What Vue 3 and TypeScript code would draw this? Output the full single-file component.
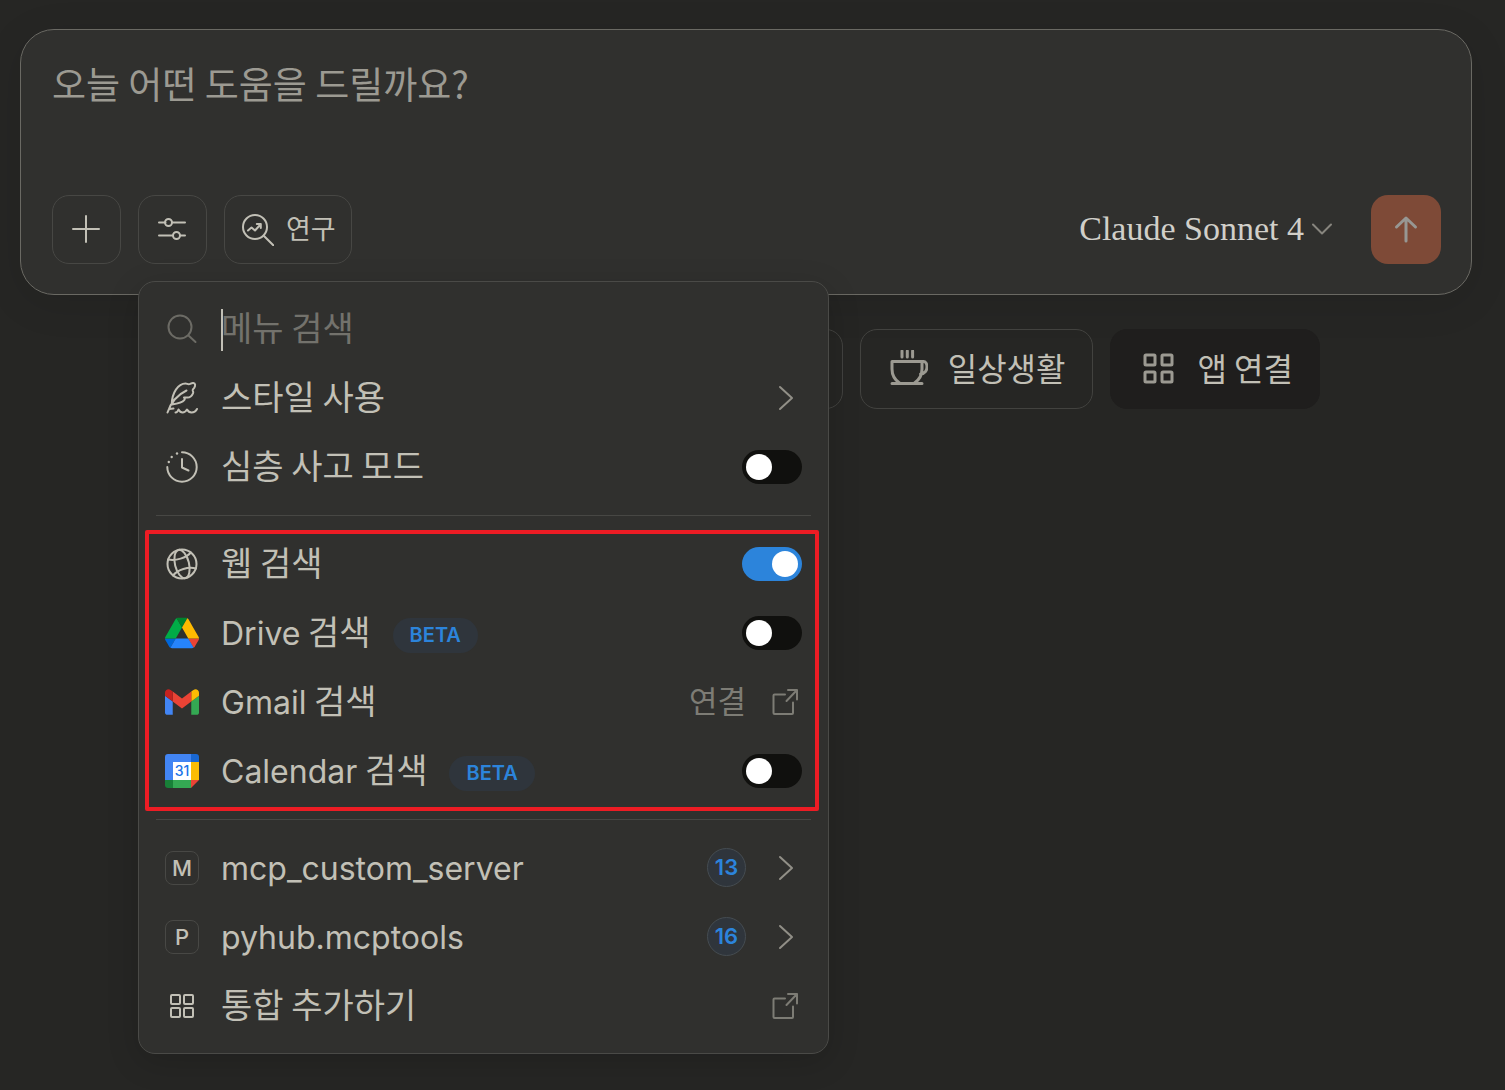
<script setup lang="ts">
import { ref } from 'vue'

type IconName = 'feather' | 'clock' | 'globe' | 'drive' | 'gmail' | 'calendar' | 'grid'

interface MenuItem {
  id: string
  latin?: string
  label?: string
  icon?: IconName
  letter?: string
  beta?: boolean
  count?: number
  trailing: 'toggle' | 'chevron' | 'external'
  note?: string
}

const groups: MenuItem[][] = [
  [
    { id: 'style', label: '스타일 사용', icon: 'feather', trailing: 'chevron' },
    { id: 'thinking', label: '심층 사고 모드', icon: 'clock', trailing: 'toggle' },
  ],
  [
    { id: 'web', label: '웹 검색', icon: 'globe', trailing: 'toggle' },
    { id: 'drive', latin: 'Drive', label: ' 검색', icon: 'drive', beta: true, trailing: 'toggle' },
    { id: 'gmail', latin: 'Gmail', label: ' 검색', icon: 'gmail', trailing: 'external', note: '연결' },
    { id: 'calendar', latin: 'Calendar', label: ' 검색', icon: 'calendar', beta: true, trailing: 'toggle' },
  ],
  [
    { id: 'mcp', latin: 'mcp_custom_server', letter: 'M', count: 13, trailing: 'chevron' },
    { id: 'pyhub', latin: 'pyhub.mcptools', letter: 'P', count: 16, trailing: 'chevron' },
    { id: 'add', label: '통합 추가하기', icon: 'grid', trailing: 'external' },
  ],
]

const enabled = ref<Record<string, boolean>>({ thinking: false, web: true, drive: false, calendar: false })
const message = ref('')
const query = ref('')
</script>

<template>
  <main class="page">
    <form class="composer" @submit.prevent>
      <textarea v-model="message" class="prompt" placeholder="오늘 어떤 도움을 드릴까요?" aria-label="메시지"></textarea>
      <div class="toolbar">
        <button type="button" class="tool" aria-label="추가">
          <svg class="icon" viewBox="0 0 34 34"><path d="M17 4v26M4 17h26" /></svg>
        </button>
        <div class="anchor">
          <button type="button" class="tool" aria-label="도구" aria-expanded="true">
            <svg class="icon" viewBox="0 0 34 34">
              <path d="M4 10.500h6.500M17 10.500h13M4 23.500h14M25 23.500h5" />
              <circle cx="13.500" cy="10.500" r="3.500" /><circle cx="21.500" cy="23.500" r="3.500" />
            </svg>
          </button>

          <div class="menu">
            <label class="row search">
              <svg class="icon" viewBox="0 0 34 34"><circle cx="15" cy="15" r="11.500" /><path d="M23.500 23.500l7 6.500" /></svg>
              <span class="field">
                <input v-model="query" type="text" placeholder="메뉴 검색" aria-label="메뉴 검색" />
                <span class="caret"></span>
              </span>
            </label>

            <div v-for="(group, g) in groups" :key="g" class="group" :class="{ marked: g === 1, divided: g > 0 }">
              <component
                :is="item.trailing === 'toggle' ? 'label' : 'button'"
                v-for="item in group"
                :key="item.id"
                class="row"
                :type="item.trailing === 'toggle' ? undefined : 'button'"
              >
                <span v-if="item.letter" class="letter">{{ item.letter }}</span>
                <svg v-else-if="item.icon === 'feather'" class="icon" viewBox="0 0 34 34">
                  <path d="M2.500 31.500C5 24 10 15 21.500 9.500M6.800 22.800C7 12 13 2.500 20.500 2.500c1.500 0 2 .8 3.200.8 1.800 0 2.600-1.600 4.600-1.300 2.200.3 2.300 2.500 1 4.700-.8 1.300-1.800 1.500-1.600 2.800.3 1.300 1 1.200.3 2.800-1 2.300-3.200 4.200-5.500 4.200-1 0-2-.3-3.500 0 1 .5 1 1.700.2 2.700-2 2.700-6.500 3.500-12.200 4.300M4.500 28l4-.5M10.500 31.500c1.500 0 2.500-1.500 3-3 1 1.800 2.200 3 4 3 2 0 3.600-1.500 4.500-3 1 1.800 2.600 3 4.500 3 2.400 0 4.400-1.300 5.500-3.500" />
                </svg>
                <svg v-else-if="item.icon === 'clock'" class="icon" viewBox="0 0 34 34">
                  <path d="M17 2.300A14.700 14.700 0 1 1 2.300 17M17 9v8.500l6.500 3" />
                  <g class="dots"><circle cx="12" cy="3.500" r="1.200" /><circle cx="6.700" cy="7" r="1.200" /><circle cx="3.800" cy="12" r="1.200" /></g>
                </svg>
                <svg v-else-if="item.icon === 'globe'" class="icon" viewBox="0 0 34 34">
                  <circle cx="17" cy="17" r="14.500" />
                  <ellipse cx="17" cy="17" rx="7" ry="14.500" transform="rotate(-14 17 17)" />
                  <path d="M3 12.500C11 14 21 11 26 5.500M8 28.500C13 22.500 23 19.500 31 21.500" />
                </svg>
                <svg v-else-if="item.icon === 'drive'" class="logo" viewBox="0 0 87.3 78">
                  <path fill="#0066da" d="m6.600 66.850 3.850 6.650c.8 1.400 1.950 2.500 3.300 3.300l13.750-23.800h-27.500c0 1.550.4 3.100 1.200 4.500z" />
                  <path fill="#00ac47" d="m43.650 25-13.750-23.800c-1.350.8-2.500 1.900-3.300 3.300l-25.400 44a9.060 9.060 0 0 0-1.200 4.500h27.500z" />
                  <path fill="#ea4335" d="m73.550 76.800c1.350-.8 2.500-1.900 3.300-3.300l1.600-2.750 7.650-13.250c.8-1.400 1.200-2.950 1.200-4.500h-27.500l5.850 11.500z" />
                  <path fill="#00832d" d="m43.650 25 13.750-23.800c-1.350-.8-2.900-1.200-4.500-1.200h-18.500c-1.600 0-3.150.45-4.500 1.200z" />
                  <path fill="#2684fc" d="m59.800 53h-32.300l-13.750 23.800c1.350.8 2.900 1.200 4.500 1.200h50.800c1.600 0 3.150-.45 4.500-1.200z" />
                  <path fill="#ffba00" d="m73.400 26.500-12.700-22c-.8-1.400-1.950-2.500-3.300-3.300l-13.750 23.800 16.150 28h27.450c0-1.550-.4-3.100-1.200-4.500z" />
                </svg>
                <svg v-else-if="item.icon === 'gmail'" class="logo" viewBox="52 42 88 66">
                  <path fill="#4285f4" d="M58 108h14V74L52 59v43c0 3.320 2.690 6 6 6" />
                  <path fill="#34a853" d="M120 108h14c3.320 0 6-2.690 6-6V59l-20 15" />
                  <path fill="#fbbc04" d="M120 48v26l20-15v-8c0-7.420-8.470-11.650-14.400-7.200" />
                  <path fill="#ea4335" d="M72 74V48l24 18 24-18v26L96 92" />
                  <path fill="#c5221f" d="M52 51v8l20 15V48l-5.600-4.200c-5.940-4.450-14.400-.22-14.400 7.200" />
                </svg>
                <svg v-else-if="item.icon === 'calendar'" class="logo" viewBox="0 0 34 34">
                  <path fill="#4285f4" d="M3 0h23v8H8v18H0V3a3 3 0 0 1 3-3z" />
                  <path fill="#1967d2" d="M26 0h5a3 3 0 0 1 3 3v5h-8z" />
                  <path fill="#fbbc04" d="M26 8h8v18h-8z" />
                  <path fill="#ea4335" d="M26 26h8l-8 8z" />
                  <path fill="#34a853" d="M8 26h18v8H8z" />
                  <path fill="#188038" d="M0 26h8v8H3a3 3 0 0 1-3-3z" />
                  <path fill="#fff" d="M8 8h18v18H8z" />
                  <text class="day" x="17" y="22" text-anchor="middle">31</text>
                </svg>
                <svg v-else class="icon" viewBox="0 0 34 34">
                  <rect x="6" y="6" width="9" height="9" rx="1" /><rect x="19" y="6" width="9" height="9" rx="1" />
                  <rect x="6" y="19" width="9" height="9" rx="1" /><rect x="19" y="19" width="9" height="9" rx="1" />
                </svg>

                <span class="label"><span v-if="item.latin" class="latin">{{ item.latin }}</span>{{ item.label }}</span>
                <span v-if="item.beta" class="beta">BETA</span>
                <span class="spacer"></span>
                <span v-if="item.note" class="note">{{ item.note }}</span>
                <span v-if="item.count" class="count">{{ item.count }}</span>

                <input v-if="item.trailing === 'toggle'" v-model="enabled[item.id]" type="checkbox" role="switch" class="toggle" />
                <svg v-else-if="item.trailing === 'chevron'" class="icon muted" viewBox="0 0 34 34"><path d="M12 6l12 11-12 11" /></svg>
                <svg v-else class="icon faint" viewBox="0 0 34 34">
                  <path d="M17 9.500H6.500a1 1 0 0 0-1 1V28a1 1 0 0 0 1 1H24a1 1 0 0 0 1-1V17.500M18.500 16L29 5M20 5h9v9.500" />
                </svg>
              </component>
            </div>
          </div>
        </div>
        <button type="button" class="tool research">
          <svg class="icon" viewBox="0 0 32 32">
            <circle cx="13" cy="13" r="12" />
            <path d="M22 22l9.500 9.500M6 16.500l3.500-3 3.500 3 5.500-6M14.800 10h4v4" />
          </svg>
          <span class="caption">연구</span>
        </button>
        <span class="spacer"></span>
        <button type="button" class="model">
          Claude Sonnet 4
          <svg class="down" viewBox="0 0 20 12"><path d="M1 1.500l9 9 9-9" /></svg>
        </button>
        <button type="submit" class="send" aria-label="보내기">
          <svg class="icon" viewBox="0 0 34 34"><path d="M17 28V5.500M7.500 14L17 5l9.500 9" /></svg>
        </button>
      </div>
    </form>

    <div class="chips">
      <span class="chip rest" aria-hidden="true"></span>
      <button type="button" class="chip">
        <svg class="icon" viewBox="0 0 38 38">
          <path d="M12 1v6M17.300 1v6M22.600 1v6M2 11.500h30V19c0 6-3 11-7.500 14M2 11.500V19c0 6 3 11 7.500 14M2 33.500h30M32 11.500h1.500c2 0 3.500 2.500 3.500 5.500s-2 7-6.500 7" />
        </svg>
        <span class="caption">일상생활</span>
      </button>
      <button type="button" class="chip active">
        <svg class="icon" viewBox="0 0 38 38">
          <rect x="5" y="5" width="10" height="10" rx="1" /><rect x="22" y="5" width="10" height="10" rx="1" />
          <rect x="5" y="22" width="10" height="10" rx="1" /><rect x="22" y="22" width="10" height="10" rx="1" />
        </svg>
        <span class="caption">앱 연결</span>
      </button>
    </div>
  </main>
</template>

<style>
body {
  margin: 0;
  background: #262624;
}
</style>

<style scoped>
.page {
  box-sizing: border-box;
  min-height: 100vh;
  padding: 29px 33px 36px 20px;
  color: #c2c0b6;
  font-family: 'Noto Sans CJK KR', sans-serif;
}

button,
input,
textarea {
  margin: 0;
  padding: 0;
  border: 0;
  background: none;
  color: inherit;
  font: inherit;
  outline: none;
}

svg {
  flex: none;
  fill: none;
  stroke: currentColor;
  stroke-width: 2;
  stroke-linecap: round;
  stroke-linejoin: round;
}

.icon {
  width: 34px;
  height: 34px;
}

.dots {
  fill: currentColor;
  stroke: none;
}

.logo {
  width: 34px;
  height: 34px;
  stroke: none;
}

.day {
  fill: #1a73e8;
  font: 500 14px Inter, sans-serif;
}

.spacer {
  flex: 1;
}

.caption {
  padding-bottom: 4px;
}

.composer {
  padding: 27px 30px 30px 31px;
  border: 1px solid #6a6963;
  border-radius: 34px;
  background: #30302e;
  box-shadow: 0 8px 40px rgba(0, 0, 0, 0.1);
}

.prompt {
  display: block;
  width: 100%;
  height: 104px;
  resize: none;
  font-size: 37px;
  line-height: 52px;
}

.prompt::placeholder {
  color: #9c9a92;
}

.toolbar {
  display: flex;
  align-items: center;
  gap: 17px;
  margin-top: 34px;
}

.anchor {
  position: relative;
}

.tool {
  display: flex;
  box-sizing: border-box;
  align-items: center;
  justify-content: center;
  width: 69px;
  height: 69px;
  padding: 0 1px 1px 0;
  border: 1px solid #474744;
  border-radius: 17px;
}

.research {
  gap: 12px;
  width: auto;
  padding: 0 15px 0 17px;
  font-size: 27px;
}

.research .icon {
  width: 32px;
  height: 32px;
}

.model {
  display: flex;
  align-items: center;
  gap: 8px;
  margin-right: 22px;
  padding-bottom: 2px;
  color: #d1cfc9;
  font-family: 'Liberation Serif', serif;
  font-size: 34px;
}

.down {
  width: 20px;
  height: 12px;
  color: #87857e;
}

.send {
  display: flex;
  align-items: center;
  justify-content: center;
  width: 70px;
  height: 69px;
  border-radius: 17px;
  background: #7e4a37;
  color: #979793;
}

.send svg {
  stroke-width: 3;
}

.menu {
  position: absolute;
  z-index: 2;
  top: 86px;
  left: 0;
  box-sizing: border-box;
  width: 691px;
  padding: 12px 0 13px;
  border: 1px solid #4a4a47;
  border-radius: 17px;
  background: #30302e;
  box-shadow: 0 8px 32px rgba(0, 0, 0, 0.16);
}

.row {
  display: flex;
  box-sizing: border-box;
  align-items: center;
  width: 100%;
  height: 69px;
  padding: 0 26px;
  gap: 22px;
  text-align: left;
}

.search {
  color: #6c6b65;
}

.field {
  position: relative;
  flex: 1;
}

.field input {
  display: block;
  box-sizing: border-box;
  width: 100%;
  height: 54px;
  padding-bottom: 4px;
  font-size: 34px;
}

.field input::placeholder {
  color: #73726c;
}

.caret {
  position: absolute;
  top: 7px;
  left: 0;
  width: 2px;
  height: 42px;
  background: #c2c0b6;
}

.group {
  position: relative;
}

.divided::before {
  content: '';
  display: block;
  height: 1px;
  margin: 14px 17px 13px;
  background: #474744;
}

.marked::after {
  content: '';
  position: absolute;
  top: 15px;
  right: 9px;
  bottom: -6px;
  left: 6px;
  border: 4px solid #ed1c24;
  border-radius: 2px;
  pointer-events: none;
}

.label {
  padding-bottom: 4px;
  font-size: 34px;
  line-height: 50px;
  white-space: pre;
}

.latin {
  font-family: Inter, sans-serif;
  font-size: 32px;
  line-height: 32px;
}

.beta {
  height: 35px;
  margin-top: 5px;
  padding: 0 17px;
  border-radius: 18px;
  background: #2f353c;
  color: #2c84db;
  font: 600 20px/35px Inter, sans-serif;
}

.letter {
  box-sizing: border-box;
  width: 34px;
  height: 34px;
  border: 1px solid #484845;
  border-radius: 8px;
  font: 500 22px/32px Inter, sans-serif;
  text-align: center;
}

.note {
  padding-bottom: 4px;
  color: #7d7c75;
  font-size: 31px;
}

.count {
  box-sizing: border-box;
  width: 39px;
  height: 39px;
  border: 1px solid #454c51;
  border-radius: 50%;
  background: #2f353c;
  color: #2c84db;
  font: 600 22px/37px Inter, sans-serif;
  text-align: center;
}

.muted {
  color: #918f87;
}

.faint {
  color: #7d7c75;
}

.toggle {
  appearance: none;
  width: 60px;
  height: 34px;
  padding: 4px;
  box-sizing: border-box;
  border-radius: 17px;
  background: #10100e;
}

.toggle::before {
  content: '';
  display: block;
  width: 26px;
  height: 26px;
  border-radius: 50%;
  background: #fff;
}

.toggle:checked {
  background: #2c84db;
}

.toggle:checked::before {
  margin-left: auto;
}

.chips {
  display: flex;
  gap: 17px;
  margin: 34px 152px 0;
}

.chip {
  display: flex;
  box-sizing: border-box;
  align-items: center;
  gap: 20px;
  height: 80px;
  padding: 0 26px 0 29px;
  border: 1px solid #42423f;
  border-radius: 17px;
  font-size: 32px;
}

.chip .icon {
  width: 38px;
  height: 38px;
  color: #9c9a92;
  stroke-width: 3;
}

.rest {
  flex: 1;
}

.active {
  border-color: #1f1e1d;
  background: #1f1e1d;
}
</style>
